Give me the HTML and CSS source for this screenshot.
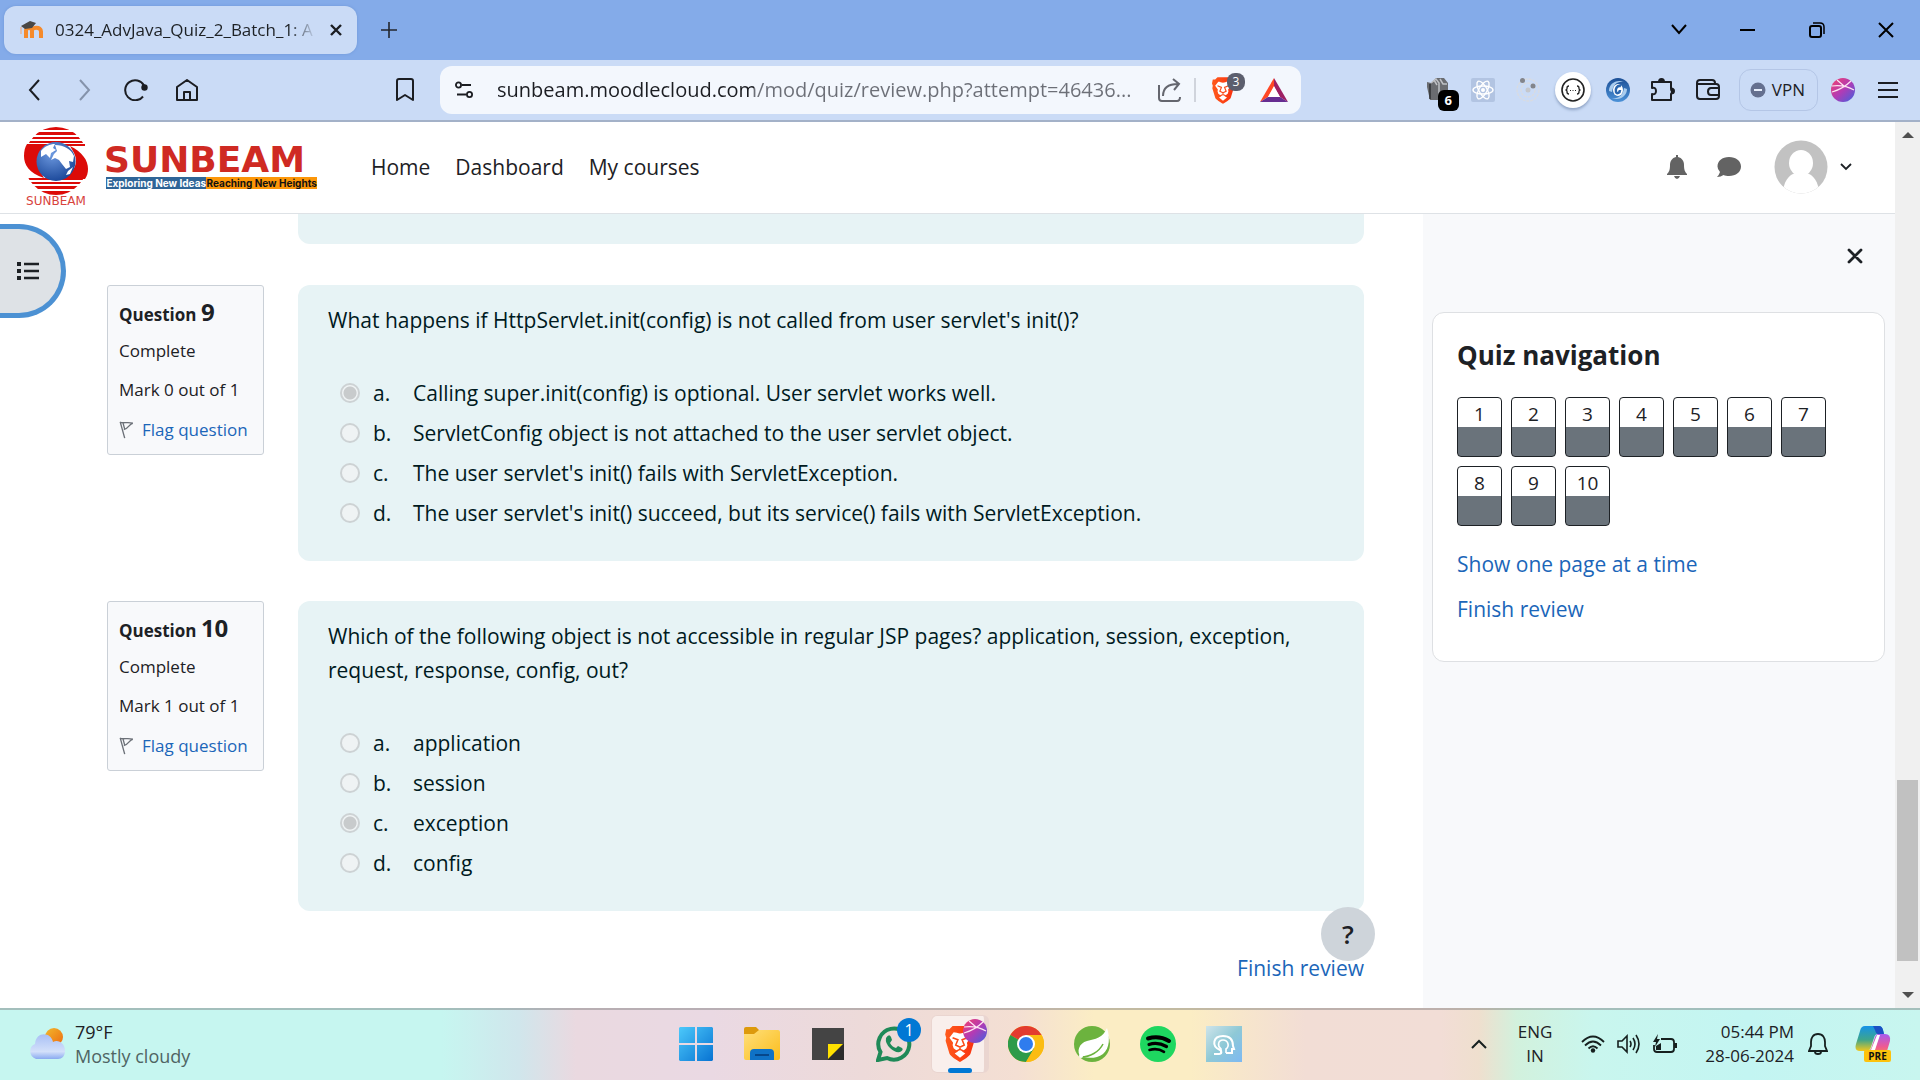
FILE: index.html
```html
<!DOCTYPE html>
<html lang="en">
<head>
<meta charset="utf-8">
<title>0324_AdvJava_Quiz_2_Batch_1: Attempt review</title>
<link rel="stylesheet" href="styles.css">
</head>
<body>
<svg class="defs" aria-hidden="true">
  <defs>
    <linearGradient id="g-orb" x1="0" y1="0" x2="1" y2="1"><stop offset="0" stop-color="#f5406a"/><stop offset=".5" stop-color="#b23bb5"/><stop offset="1" stop-color="#3f62e0"/></linearGradient>
    <linearGradient id="g-brave" x1="0" y1="0" x2="1" y2="0"><stop offset="0" stop-color="#ff5a1c"/><stop offset="1" stop-color="#f9310f"/></linearGradient>
    <linearGradient id="g-win" x1="0" y1="0" x2="1" y2="1"><stop offset="0" stop-color="#4cc9fb"/><stop offset="1" stop-color="#0873d2"/></linearGradient>
    <linearGradient id="g-folder" x1="0" y1="0" x2="1" y2="1"><stop offset="0" stop-color="#ffdf7a"/><stop offset="1" stop-color="#fbbd1c"/></linearGradient>
    <linearGradient id="g-cloud" x1="0" y1="0" x2="0" y2="1"><stop offset="0" stop-color="#a9c0f5"/><stop offset=".7" stop-color="#d3e0fa"/><stop offset="1" stop-color="#8aaaf0"/></linearGradient>
    <linearGradient id="g-sun" x1="0" y1="0" x2="1" y2="1"><stop offset="0" stop-color="#f2b92c"/><stop offset="1" stop-color="#ee6a11"/></linearGradient>
    <linearGradient id="g-head" x1="0" y1="0" x2="1" y2="1"><stop offset="0" stop-color="#cfe4ea"/><stop offset=".5" stop-color="#8fc9d6"/><stop offset="1" stop-color="#7db9f2"/></linearGradient>
    <linearGradient id="g-cop1" x1="0" y1="0" x2="0" y2="1"><stop offset="0" stop-color="#1592e8"/><stop offset=".55" stop-color="#3ea58c"/><stop offset="1" stop-color="#f2c81c"/></linearGradient>
    <linearGradient id="g-cop2" x1="0" y1="0" x2="0" y2="1"><stop offset="0" stop-color="#a55bf0"/><stop offset=".6" stop-color="#ee5a93"/><stop offset="1" stop-color="#fb8a4a"/></linearGradient>
    <radialGradient id="g-globe" cx=".4" cy=".3" r=".8"><stop offset="0" stop-color="#6e9ae0"/><stop offset="1" stop-color="#123f92"/></radialGradient>
    <linearGradient id="g-swirl" x1="0" y1="0" x2="0" y2="1"><stop offset="0" stop-color="#1c4f96"/><stop offset="1" stop-color="#4c92d8"/></linearGradient>
    <symbol id="orb" viewBox="0 0 24 24"><circle cx="12" cy="12" r="12" fill="url(#g-orb)"/><path d="M1 8c8-1 15 0 22 4M1 14C8 12 15 8 20 3M6 2l7 6" fill="none" stroke="#ffe3f2" stroke-width="1.200"/></symbol>
    <symbol id="lion" viewBox="0 0 28 34"><path fill="url(#g-brave)" d="M7 0h14l3 3 3 0 1 5-1 3 .6 3L24 26c-1 3-7 6-10 8-3-2-9-5-10-8L.4 14 1 11 0 8l1-5 3 0z"/><path fill="#fff" d="M14 7c-2 0-4-1-6-1L4 11l3 4c1 1 0 2 0 3l1 3 4 3-3 2 5 4 5-4-3-2 4-3 1-3c0-1-1-2 0-3l3-4-4-5c-2 0-4 1-6 1z"/><path fill="none" stroke="#fb4a18" stroke-width="1.500" d="M7 11l5 2-2 5 4 2 4-2-2-5 5-2M10 24l4-2 4 2M14 20v2"/></symbol>
    <symbol id="flag" viewBox="0 0 16 20"><path d="M1 1 6 19M1 1.500c4 1.500 8-1 14 1C11 3 10 9 5 9.500M4 1.800 6 9" fill="none" stroke="#6b7077" stroke-width="1.500"/></symbol>
  </defs>
</svg>

<header class="tabstrip">
  <div class="tab">
    <svg class="favicon" viewBox="0 0 24 18" width="24" height="18"><path d="M6 17V9.500c0-3.500 6-3.500 6 0V17M12 9.500c0-3.500 9-4.500 9 1V17" fill="none" stroke="#f58a2b" stroke-width="4"/><path d="M1 5 10 0l6 2-4 5-7 1z" fill="#4a4745"/><path d="M1 6v7" stroke="#e3b79c" stroke-width="1.500"/></svg>
    <span class="tab-title">0324_AdvJava_Quiz_2_Batch_1: A</span>
    <button class="icon-btn tab-close" aria-label="Close tab"><svg width="12" height="12" viewBox="0 0 12 12"><path d="m1 1 10 10M11 1 1 11" stroke="#1b1d22" stroke-width="2.400"/></svg></button>
  </div>
  <button class="icon-btn new-tab" aria-label="New tab"><svg width="16" height="16" viewBox="0 0 16 16"><path d="M8 0v16M0 8h16" stroke="#22262e" stroke-width="1.600"/></svg></button>
  <div class="window-controls">
    <button class="icon-btn" aria-label="Search tabs"><svg width="16" height="12" viewBox="0 0 16 12"><path d="m1 1 7 8 7-8" fill="none" stroke="#000" stroke-width="2"/></svg></button>
    <button class="icon-btn" aria-label="Minimize"><svg width="16" height="4" viewBox="0 0 16 4"><path d="M0 2h15" stroke="#000" stroke-width="2"/></svg></button>
    <button class="icon-btn" aria-label="Restore"><svg width="16" height="16" viewBox="0 0 16 16"><rect x="1" y="4" width="11" height="11" rx="2" fill="none" stroke="#000" stroke-width="2"/><path d="M4 1h7q4 0 4 4v7" fill="none" stroke="#000" stroke-width="1.500"/></svg></button>
    <button class="icon-btn" aria-label="Close window"><svg width="16" height="16" viewBox="0 0 16 16"><path d="m1 1 14 14M15 1 1 15" stroke="#000" stroke-width="2"/></svg></button>
  </div>
</header>

<div class="toolbar">
  <div class="toolbar-left">
    <button class="icon-btn" aria-label="Back"><svg width="12" height="22" viewBox="0 0 12 22"><path d="M11 1 2 11l9 10" fill="none" stroke="#1b1d22" stroke-width="2"/></svg></button>
    <button class="icon-btn" aria-label="Forward"><svg width="12" height="22" viewBox="0 0 12 22"><path d="m1 1 9 10-9 10" fill="none" stroke="#8593ab" stroke-width="2"/></svg></button>
    <button class="icon-btn" aria-label="Reload"><svg width="24" height="22" viewBox="0 0 24 22"><path d="M20 6.500A10 10 0 1 0 19 17.500" fill="none" stroke="#1b1d22" stroke-width="2"/><circle cx="20.500" cy="8.500" r="3.200" fill="#1b1d22"/></svg></button>
    <button class="icon-btn" aria-label="Home"><svg width="22" height="22" viewBox="0 0 22 22"><path d="M1 8 11 1l10 7v13H1zM8 21v-8h6v8" fill="none" stroke="#1b1d22" stroke-width="2" stroke-linejoin="round"/></svg></button>
    <button class="icon-btn bookmark" aria-label="Bookmark"><svg width="18" height="24" viewBox="0 0 18 24"><path d="M1 3q0-2 2-2h12q2 0 2 2v19l-8-5-8 5z" fill="none" stroke="#1b1d22" stroke-width="2" stroke-linejoin="round"/></svg></button>
  </div>
  <div class="address-bar">
    <button class="icon-btn" aria-label="Site settings"><svg width="18" height="18" viewBox="0 0 18 18"><path d="M7 4h9M2 13.500h9" stroke="#1b1d22" stroke-width="1.800"/><circle cx="3.500" cy="4" r="2.600" fill="none" stroke="#1b1d22" stroke-width="1.800"/><circle cx="14.500" cy="13.500" r="2.600" fill="none" stroke="#1b1d22" stroke-width="1.800"/></svg></button>
    <input class="url" type="text" aria-label="Address" value="sunbeam.moodlecloud.com/mod/quiz/review.php?attempt=46436...">
    <button class="icon-btn" aria-label="Share"><svg width="24" height="24" viewBox="0 0 24 24"><path d="M1 7v13q0 3 3 3h15q3 0 3-4M5 18C5 10 10 6 20 6M15 1l6 5-5 6" fill="none" stroke="#64666e" stroke-width="2"/></svg></button>
    <span class="divider"></span>
    <button class="icon-btn shields" aria-label="Brave Shields"><svg width="22" height="27"><use href="#lion"/></svg><span class="shield-count">3</span></button>
    <button class="icon-btn" aria-label="Brave Rewards"><svg width="28" height="24" viewBox="0 0 28 24"><path d="M14 0 0 24l8-5 6-10z" fill="#ff4724"/><path d="M14 0v9l6 10 8 5z" fill="#9e1f63"/><path d="m0 24 8-5h12l8 5z" fill="#662d91"/><path d="m14 8 6 11H8z" fill="#fff"/></svg></button>
  </div>
  <div class="toolbar-right">
    <button class="icon-btn ext-count" aria-label="Container extension"><svg width="24" height="24" viewBox="0 0 24 24"><path d="M5 5 10 0h8l4 5v17H4L1 9V4z" fill="#6a6c70"/><path d="m5 5 5-4 3 4v17M14 1l3 5h4M8 2l3 5" fill="none" stroke="#bfc1c5" stroke-width="1.500"/><path d="M4 6v15" stroke="#303235" stroke-width="1.500"/></svg><span class="count">6</span></button>
    <button class="icon-btn" aria-label="React tools"><svg width="24" height="24" viewBox="0 0 24 24"><rect width="24" height="24" rx="2" fill="#b2c4e2"/><g fill="none" stroke="#fff" stroke-width="1.400"><ellipse cx="12" cy="12" rx="10" ry="4"/><ellipse cx="12" cy="12" rx="10" ry="4" transform="rotate(60 12 12)"/><ellipse cx="12" cy="12" rx="10" ry="4" transform="rotate(120 12 12)"/></g><circle cx="12" cy="12" r="2" fill="#fff"/></svg></button>
    <button class="icon-btn" aria-label="Orbit extension"><svg width="24" height="24" viewBox="0 0 24 24"><g fill="none" stroke="#d9dbe0" stroke-width="1.300" stroke-dasharray="3 1"><circle cx="12" cy="12" r="11"/><circle cx="12" cy="12" r="7"/></g><circle cx="12" cy="12" r="2.500" fill="#c5c7cc"/><circle cx="6.500" cy="2.500" r="2.500" fill="#83858b"/><circle cx="17" cy="8" r="2.500" fill="#83858b"/></svg></button>
    <button class="icon-btn" aria-label="JSON viewer"><span class="json-disc"><svg width="24" height="24" viewBox="0 0 24 24"><circle cx="12" cy="12" r="11" fill="none" stroke="#222" stroke-width="1.600"/><path d="M8 8q-2 0-2 2v1l-1 1 1 1v1q0 2 2 2M16 8q2 0 2 2v1l1 1-1 1v1q0 2-2 2" fill="none" stroke="#222" stroke-width="1.300"/><path d="M9 12.500h1m1.500 0h1m1.500 0h1" stroke="#222" stroke-width="1"/></svg></span></button>
    <button class="icon-btn" aria-label="Swirl extension"><svg width="24" height="24" viewBox="0 0 24 24"><circle cx="12" cy="12" r="12" fill="url(#g-swirl)"/><path d="M3 13C3 6 10 1 18 4 11 3 7 7 6 14zM21 11c0 7-7 12-15 9 7 1 11-3 12-10z" fill="#a9ccee"/><ellipse cx="12" cy="12" rx="5" ry="6" fill="#fff"/><path d="M15 8c-4-1-6 3-5 6 1 2 4 1 4-2" fill="none" stroke="#2a66ae" stroke-width="2.600"/></svg></button>
    <button class="icon-btn" aria-label="Extensions"><svg width="26" height="24" viewBox="0 0 26 24"><path d="M2 4h19v6q0 3 1 3t-1 3v6H2v-6q4 1 4-3t-4-3z" fill="none" stroke="#1b1d22" stroke-width="2" stroke-linejoin="round"/><path d="M8 4q0-4 3.500-4T15 4zM21 9.500q4 0 4 3.500t-4 3.500z" fill="#1b1d22"/></svg></button>
    <button class="icon-btn" aria-label="Wallet"><svg width="24" height="22" viewBox="0 0 24 22"><path d="M1 4q0-3 3-3h12q3 0 3 3v1M1 4q0 1 3 1h16q3 0 3 3v9q0 3-3 3H4q-3 0-3-3zM23 9h-8q-3 0-3 3.500t3 3.500h8" fill="none" stroke="#1b1d22" stroke-width="2" stroke-linejoin="round"/></svg></button>
    <button class="vpn"><svg width="16" height="16" viewBox="0 0 16 16"><circle cx="8" cy="8" r="7.500" fill="#65708f"/><path d="M4 8h8" stroke="#e8effc" stroke-width="2"/></svg>VPN</button>
    <button class="icon-btn" aria-label="Profile"><svg width="24" height="24"><use href="#orb"/></svg></button>
    <button class="icon-btn" aria-label="Menu"><svg width="20" height="16" viewBox="0 0 20 16"><path d="M0 1h20M0 8h20M0 15h20" stroke="#1b1d22" stroke-width="1.800"/></svg></button>
  </div>
</div>

<div class="viewport">
  <div class="page">
    <header class="site-header">
      <a class="brand" href="#" aria-label="Sunbeam">
        <svg class="brand-mark" width="64" height="80" viewBox="0 0 64 80">
          <clipPath id="disc"><ellipse cx="32" cy="34" rx="32" ry="34"/></clipPath>
          <g clip-path="url(#disc)"><path fill="#dc0b08" d="M0 0h64v3H0zM0 5h64v3H0zM0 10h64v2H0zM0 14h64v2H0zM0 51h64v2H0zM0 55h64v2H0zM0 59h64v3H0zM0 64h64v4H0z"/></g>
          <path fill="#dc0b08" d="M3 17h58v2H42C22 20 12 32 16 44l4 7C5 46 0 38 0 29c0-5 1-9 3-12z"/>
          <path fill="#dc0b08" d="M46 19c12 6 18 14 18 23 0 4-1 7-3 10H30C48 50 56 38 50 26z"/>
          <circle cx="32" cy="34.500" r="19.500" fill="url(#g-globe)"/>
          <path fill="#fff" d="M17 24c4-5 9-7 14-7l-2 4 3 2-5 3-1 5-4-4-5 3zM31 18c9 0 16 4 19 11l-1 6-4-1 1 6-4 2-4-5-3-4-4-2-4 2 3-6 3-3zM44 44l5-4-3 7-4 1z"/>
          <text x="32" y="78" text-anchor="middle" class="brand-small">SUNBEAM</text>
        </svg>
        <span class="wordmark"><span class="wordmark-name">SUNBEAM</span><span class="tagline"><span class="tag-blue">Exploring New Ideas</span><span class="tag-orange">Reaching New Heights</span></span></span>
      </a>
      <nav class="site-nav"><a href="#">Home</a><a href="#">Dashboard</a><a href="#">My courses</a></nav>
      <div class="user-tools">
        <button class="icon-btn" aria-label="Notifications"><svg width="20" height="24" viewBox="0 0 20 24"><path fill="#636363" d="M9 0h2v2c4 1 6 4 6 8 0 5 1 7 3 9v1H0v-1c2-2 3-4 3-9 0-4 2-7 6-8zM7 21h6q-1 3-3 3t-3-3z"/></svg></button>
        <button class="icon-btn" aria-label="Messages"><svg width="24" height="20" viewBox="0 0 24 20"><path fill="#636363" d="M12 0c7 0 12 4 12 9.500S19 19 12 19c-2 0-4-.3-5.500-1Q4 20 0 20q2-2 3-5-2.500-2.500-2.500-5.500C.5 4 5 0 12 0z"/></svg></button>
        <button class="user-menu" aria-label="User menu"><svg width="54" height="54" viewBox="0 0 54 54"><clipPath id="av"><circle cx="27" cy="27" r="26.500"/></clipPath><g clip-path="url(#av)"><rect width="54" height="54" fill="#c2c2c2"/><ellipse cx="27" cy="23" rx="12" ry="13" fill="#fff"/><path d="M9 54c0-12 6-20 13-21h10c7 1 13 9 13 21z" fill="#fff"/></g></svg><svg width="12" height="8" viewBox="0 0 12 8"><path d="m1 1 5 5 5-5" fill="none" stroke="#1d2125" stroke-width="1.800"/></svg></button>
      </div>
    </header>

    <div class="page-body">
      <button class="drawer-toggle" aria-label="Open course index"><svg width="22" height="20" viewBox="0 0 22 20"><path d="M7 3h15M7 10h15M7 17h15" stroke="#1d2125" stroke-width="2.400"/><path d="M0 3h4M0 10h4M0 17h4" stroke="#1d2125" stroke-width="4"/></svg></button>
      <main class="content">
        <div class="prev-question"></div>

        <section class="question">
          <div class="info">
            <h3>Question <span class="qno">9</span></h3>
            <p>Complete</p>
            <p>Mark 0 out of 1</p>
            <a href="#"><svg width="15" height="18"><use href="#flag"/></svg>Flag question</a>
          </div>
          <fieldset class="formulation">
            <legend class="qtext">What happens if HttpServlet.init(config) is not called from user servlet's init()?</legend>
            <ul class="answers">
              <li><label><input type="radio" name="q9" checked disabled><span class="letter">a.</span><span>Calling super.init(config) is optional. User servlet works well.</span></label></li>
              <li><label><input type="radio" name="q9" disabled><span class="letter">b.</span><span>ServletConfig object is not attached to the user servlet object.</span></label></li>
              <li><label><input type="radio" name="q9" disabled><span class="letter">c.</span><span>The user servlet's init() fails with ServletException.</span></label></li>
              <li><label><input type="radio" name="q9" disabled><span class="letter">d.</span><span>The user servlet's init() succeed, but its service() fails with ServletException.</span></label></li>
            </ul>
          </fieldset>
        </section>

        <section class="question">
          <div class="info">
            <h3>Question <span class="qno">10</span></h3>
            <p>Complete</p>
            <p>Mark 1 out of 1</p>
            <a href="#"><svg width="15" height="18"><use href="#flag"/></svg>Flag question</a>
          </div>
          <fieldset class="formulation">
            <legend class="qtext">Which of the following object is not accessible in regular JSP pages? application, session, exception, request, response, config, out?</legend>
            <ul class="answers">
              <li><label><input type="radio" name="q10" disabled><span class="letter">a.</span><span>application</span></label></li>
              <li><label><input type="radio" name="q10" disabled><span class="letter">b.</span><span>session</span></label></li>
              <li><label><input type="radio" name="q10" checked disabled><span class="letter">c.</span><span>exception</span></label></li>
              <li><label><input type="radio" name="q10" disabled><span class="letter">d.</span><span>config</span></label></li>
            </ul>
          </fieldset>
        </section>

        <div class="submit-row"><a href="#">Finish review</a><button class="help" aria-label="Help">?</button></div>
      </main>

      <aside class="drawer">
        <button class="icon-btn drawer-close" aria-label="Close block drawer"><svg width="16" height="16" viewBox="0 0 16 16"><path d="m2 2 12 12M14 2 2 14" stroke="#1d2125" stroke-width="2.800" stroke-linecap="round"/></svg></button>
        <section class="nav-card">
          <h2>Quiz navigation</h2>
          <div class="qn-buttons">
            <a href="#">1</a><a href="#">2</a><a href="#">3</a><a href="#">4</a><a href="#">5</a><a href="#">6</a><a href="#">7</a><a href="#">8</a><a href="#">9</a><a href="#">10</a>
          </div>
          <a class="card-link" href="#">Show one page at a time</a>
          <a class="card-link" href="#">Finish review</a>
        </section>
      </aside>
    </div>
  </div>
  <div class="scrollbar" aria-hidden="true">
    <svg width="12" height="6" viewBox="0 0 12 6"><path d="M6 0 12 6H0z" fill="#505050"/></svg>
    <div class="track"><span class="before"></span><span class="thumb"></span><span class="after"></span></div>
    <svg width="12" height="6" viewBox="0 0 12 6"><path d="M0 0h12L6 6z" fill="#505050"/></svg>
  </div>
</div>

<footer class="taskbar">
  <div class="weather">
    <svg width="38" height="32" viewBox="0 0 38 32"><circle cx="26" cy="9" r="9" fill="url(#g-sun)"/><path d="M8 31a8 8 0 0 1-1-15C8 3 23 4 25 14c5-3 12 1 12 9 0 5-3 8-7 8z" fill="url(#g-cloud)"/></svg>
    <div class="two-line"><span>79°F</span><span class="muted">Mostly cloudy</span></div>
  </div>
  <div class="apps">
    <button aria-label="Start"><svg width="36" height="36" viewBox="0 0 36 36"><path fill="url(#g-win)" d="M2 1h15v16H1V2zM19 1h15l1 1v15H19zM1 19h16v16H2l-1-1zM19 19h16v15l-1 1H19z"/></svg></button>
    <button aria-label="File Explorer"><svg width="36" height="34" viewBox="0 0 36 34"><path fill="#dd9a0c" d="M0 2q0-2 2-2h10l3 3v5H0z"/><path fill="url(#g-folder)" d="M0 7h10l5-4h19q2 0 2 2v26q0 2-2 2H2q-2 0-2-2z"/><path fill="#0f72c6" d="M6 33v-7q0-4 4-4h16q4 0 4 4v7z"/><path d="M11 28h14" stroke="#06478a" stroke-width="2"/></svg></button>
    <button aria-label="Sticky Notes"><svg width="32" height="32" viewBox="0 0 32 32"><path d="M0 0h32v32H0z" fill="#444"/><path d="M16 16h16v16H16z" fill="#2c2c2c"/><path d="M16 16h15L16 31z" fill="#ffe100"/></svg></button>
    <button aria-label="WhatsApp, 1 unread"><svg width="36" height="36" viewBox="0 0 36 36"><path d="m2 34 2.500-8A15.500 15.500 0 1 1 11 32z" fill="none" stroke="#1f8a58" stroke-width="4"/><path d="M10 12q3-5 5-1l1 3-2 3q2 4 6 5l2-2 4 2q2 2-2 4-5 1-10-4-5-5-4-10z" fill="#1f8a58"/></svg><span class="app-badge">1</span></button>
    <button class="active" aria-label="Brave"><svg width="30" height="36"><use href="#lion"/></svg><svg class="orb-badge" width="24" height="24"><use href="#orb"/></svg></button>
    <button aria-label="Chrome"><svg width="36" height="36" viewBox="0 0 36 36"><circle cx="18" cy="18" r="18" fill="#fbbc12"/><path d="M18 18 2.400 9A18 18 0 0 1 33.600 9L18 9z" fill="#e33b2e"/><path d="M2.400 9A18 18 0 0 0 18 36l8-13.500-8-4.500z" fill="#2d9b4a"/><path d="M18 9h15.600A18 18 0 0 1 18 36l8-13.500z" fill="#fbbc12"/><circle cx="18" cy="18" r="9" fill="#fff"/><circle cx="18" cy="18" r="7" fill="#2f7cee"/></svg></button>
    <button aria-label="Spring Tools"><svg width="36" height="36" viewBox="0 0 36 36"><circle cx="18" cy="18" r="18" fill="#6cb33e"/><path d="M33 2c3 9 3 20-4 26-6 5-15 4-22 3-5-5-2-14 6-16 8-2 16-3 20-13z" fill="#fff"/><path d="M7 31c9 0 18-5 22-13" fill="none" stroke="#6cb33e" stroke-width="1.500"/><circle cx="7" cy="30" r="2" fill="#fff"/></svg></button>
    <button aria-label="Spotify"><svg width="36" height="36" viewBox="0 0 36 36"><circle cx="18" cy="18" r="18" fill="#1ed760"/><g fill="none" stroke="#000" stroke-linecap="round"><path d="M8 12.500c7-2 15-1 21 2.500" stroke-width="4"/><path d="M9 18.500c6-2 12-1 17.500 2" stroke-width="3.200"/><path d="M9.500 24c5-1.500 10-1 14.500 1.800" stroke-width="2.600"/></g></svg></button>
    <button aria-label="Mind app"><svg width="36" height="36" viewBox="0 0 36 36"><path fill="url(#g-head)" d="M0 0h36v36H0z"/><path d="M8 28h5c3 0 3-3 1-4-9-4-7-14 3-14 7 0 10 4 10 10l1 3h-2v4h-6" fill="none" stroke="#fff" stroke-width="2"/><path d="M15 28v-5c-4-3-3-9 2-9s7 6 3 9v4" fill="none" stroke="#fff" stroke-width="1.600"/></svg></button>
  </div>
  <div class="tray">
    <button class="icon-btn chevron" aria-label="Show hidden icons"><svg width="16" height="10" viewBox="0 0 16 10"><path d="m1 9 7-7 7 7" fill="none" stroke="#16201f" stroke-width="2"/></svg></button>
    <div class="two-line lang"><span>ENG</span><span>IN</span></div>
    <div class="status">
      <svg width="24" height="18" viewBox="0 0 24 18"><g fill="none" stroke="#16201f" stroke-width="1.800"><path d="M1 7q11-11 22 0M4 10.500q8-8 16 0M7.500 13.500q4.500-4.500 9 0"/></g><circle cx="12" cy="15.500" r="2.200" fill="#16201f"/></svg>
      <svg width="24" height="20" viewBox="0 0 24 20"><path d="M1 7h4l5-5v16l-5-5H1zM13 7q2 3 0 6M16 4q4 6 0 12M19 1q6 9 0 18" fill="none" stroke="#16201f" stroke-width="1.600"/></svg>
      <svg width="24" height="20" viewBox="0 0 24 20"><path d="M8 5h10q3 0 3 3v7q0 3-3 3H4q-3 0-3-3v-4" fill="none" stroke="#16201f" stroke-width="1.800"/><path d="M21 9h3v5h-3zM3 16v-4l5-3v7zM5 0 0 8h3l-1 5 5-8H4z" fill="#16201f"/></svg>
    </div>
    <div class="two-line clock"><span>05:44 PM</span><span>28-06-2024</span></div>
    <button class="icon-btn bell" aria-label="Notification center"><svg width="20" height="22" viewBox="0 0 20 22"><path d="M10 1C5 1 3 5 3 9v4l-2 5h18l-2-5V9c0-4-2-8-7-8zM7 19q0 2 3 2t3-2" fill="none" stroke="#16201f" stroke-width="1.800"/></svg></button>
    <button class="icon-btn copilot" aria-label="Copilot preview"><svg width="36" height="30" viewBox="0 0 36 30"><path d="M10 0h14q3 0 4 4l1 4h-6q-3 0-4 4l-3 9q-1 4-5 4H5q-6 0-4-7L5 5q1-5 5-5z" fill="url(#g-cop1)"/><path d="M18 0h6q3 0 4 4l1 4h-6q-2 0-3-4z" fill="#1c50c4"/><path d="M23 8h7q6 0 5 7l-3 10q-1 4-5 4H13q-2 0-3-4h2q4 0 5-5l3-9q1-3 3-3z" fill="url(#g-cop2)"/><path d="M22 9h3l-5 15h-4z" fill="#fff"/></svg><span class="pre">PRE</span></button>
  </div>
</footer>
</body>
</html>
```
FILE: styles.css
```css
* { box-sizing: border-box; }

:root {
  --ink: #1d2125;
  --link: #1b66b9;
  --panel: #e7f3f5;
  --soft: #f8f9fb;
}

body {
  margin: 0;
  height: 100vh;
  display: flex;
  flex-direction: column;
  overflow: hidden;
  font-family: "Open Sans", "Noto Sans", sans-serif;
  font-size: 21px;
  line-height: 34px;
  color: var(--ink);
  background: #fff;
}

button { font: inherit; color: inherit; border: 0; padding: 0; background: none; }
a { color: var(--link); text-decoration: none; }
h2, h3, p, ul { margin: 0; padding: 0; }
svg { display: block; flex: none; }
.defs { position: absolute; width: 0; height: 0; }

.icon-btn { display: flex; align-items: center; justify-content: center; flex: none; }

/* Tab strip */
.tabstrip { display: flex; align-items: center; height: 60px; flex: none; padding-left: 4px; background: #84abe9; }
.tab { display: flex; align-items: center; width: 353px; height: 48px; padding: 0 14px 0 16px; border-radius: 12px; background: #cadbf6; box-shadow: 0 0 3px #6f97d6; }
.tab-title { flex: 1; min-width: 0; margin-left: 11px; white-space: nowrap; font-size: 17px; mask-image: linear-gradient(to right, #000 90%, transparent); }
.tab-close { width: 40px; margin-right: -13px; height: 32px; }
.new-tab { width: 64px; height: 48px; }
.window-controls { display: flex; margin-left: auto; }
.window-controls .icon-btn { width: 69px; height: 60px; }

/* Toolbar */
.toolbar { display: grid; grid-template-columns: 440fr 861fr 619fr; align-items: center; height: 62px; flex: none; background: #cadbf6; border-bottom: 2px solid #a3b1c8; }
.toolbar-left { display: flex; padding: 0 10px 0 8px; }
.toolbar-left .icon-btn { width: 51px; height: 48px; }
.toolbar-left .bookmark { margin-left: auto; }
.address-bar { display: flex; align-items: center; height: 48px; padding: 0 13px 0 15px; border-radius: 12px; background: #f3f7fd; }
.url {
  flex: 1; min-width: 0; margin: 0 20px 0 24px; padding: 0; border: 0; outline: 0;
  font: inherit; font-size: 20px; line-height: 32px; color: #1b1d22;
  background: linear-gradient(to right, #1b1d22 257px, #6c6f77 257px);
  -webkit-background-clip: text; background-clip: text;
  -webkit-text-fill-color: transparent;
}
.divider { width: 2px; height: 24px; margin: 0 16px 0 12px; background: #d0d4dc; }
.shields { position: relative; margin-right: 26px; }
.shield-count { position: absolute; top: -4px; left: 15px; width: 18px; height: 18px; border-radius: 8px; background: #5c5f6e; color: #fff; font-size: 12px; line-height: 18px; }
.toolbar-right { display: flex; align-items: center; justify-content: flex-end; padding-right: 10px; }
.toolbar-right .icon-btn { width: 45px; height: 48px; }
.ext-count { position: relative; }
.count { position: absolute; left: 22px; bottom: 3px; width: 21px; height: 21px; border-radius: 6px; background: #000; color: #fff; font-size: 13px; font-weight: 700; line-height: 21px; }
.json-disc { display: flex; align-items: center; justify-content: center; width: 36px; height: 36px; border-radius: 50%; background: #fff; box-shadow: 0 2px 3px #8fa3c4; }
.vpn { display: flex; align-items: center; gap: 6px; height: 42px; margin: 0 2px 0 8px; padding: 0 12px 0 10px; border: 1px solid #b4c6e6; border-radius: 12px; font-size: 17px; }

/* Site page */
.viewport { display: flex; flex: 1; min-height: 0; }
.page { display: flex; flex-direction: column; flex: 1; min-width: 0; }
.site-header { display: flex; align-items: center; flex: none; height: 92px; padding: 0 43px 2px 24px; border-bottom: 1px solid #dee2e6; }
.brand { display: flex; align-items: center; gap: 16px; }
.brand-small { font-family: "DejaVu Sans", sans-serif; font-size: 12px; fill: #d8423c; }
.wordmark { display: flex; flex-direction: column; gap: 1px; width: 213px; }
.wordmark-name { font-family: "DejaVu Sans", sans-serif; font-size: 36px; font-weight: 700; line-height: 32px; color: #cf2a23; }
.tagline { display: flex; margin-left: 2px; font-family: Inter, sans-serif; font-size: 10px; font-weight: 700; line-height: 12px; white-space: nowrap; }
.tag-blue { flex: 100; text-align: center; background: #2f6597; color: #fff; }
.tag-orange { flex: 110; text-align: center; background: #fc9608; color: #111; }
.site-nav { display: flex; gap: 25px; margin-left: 54px; }
.site-nav a { color: var(--ink); }
.user-tools { display: flex; align-items: center; gap: 30px; margin-left: auto; }
.user-menu { display: flex; align-items: center; gap: 12px; margin-left: 3px; }

.page-body { position: relative; display: flex; flex: 1; min-height: 0; }
.content { flex: 1; min-width: 0; padding: 0 59px 0 107px; }
.drawer-toggle { position: absolute; left: 0; top: 10px; display: flex; align-items: center; width: 66px; height: 94px; padding-left: 17px; border: 5px solid #4c91d3; border-left: 0; border-radius: 0 47px 47px 0; background: #dee2e6; }

.prev-question { height: 30px; margin: 0 0 41px 191px; border-radius: 0 0 12px 12px; background: var(--panel); }
.question { display: flex; align-items: flex-start; gap: 34px; margin-bottom: 40px; }
.info { flex: none; width: 157px; height: 170px; padding: 9px 11px; border: 1px solid #cad0d7; border-radius: 3px; background: var(--soft); font-size: 17px; line-height: 40px; white-space: nowrap; }
.info h3 { font-size: 17px; line-height: 34px; }
.info .qno { font-size: 24px; }
.info p:first-of-type { line-height: 38px; }
.info a { display: flex; align-items: center; gap: 8px; }
.formulation { flex: 1; min-width: 0; margin: 0; padding: 18px 30px 28px; border: 0; border-radius: 12px; background: var(--panel); color: #001a1e; }
.qtext { float: left; width: 100%; padding: 0; margin-bottom: 36px; }
.answers { clear: both; list-style: none; padding-left: 12px; }
.answers label { display: flex; align-items: center; height: 40px; }
.answers input { appearance: none; flex: none; width: 20px; height: 20px; margin: 0 13px 0 0; border: 2px solid #cdd2d4; border-radius: 50%; background: #eff3f4; }
.answers input:checked { background: radial-gradient(circle, #c8cbcc 6px, #eff3f4 7px); }
.letter { width: 40px; }
.submit-row { position: relative; display: flex; justify-content: flex-end; }
.help { position: absolute; right: -11px; top: -44px; width: 54px; height: 54px; border-radius: 50%; background: #ced4da; font-size: 26px; font-weight: 600; }

.drawer { flex: none; width: 472px; padding: 22px 10px 0 9px; background: var(--soft); }
.drawer-close { width: 40px; height: 40px; margin: 0 10px 36px auto; }
.nav-card { padding: 24px 24px 25px; border: 1px solid #dee0e3; border-radius: 12px; background: #fff; }
.nav-card h2 { margin-bottom: 24px; font-size: 26px; line-height: 36px; }
.qn-buttons { display: flex; flex-wrap: wrap; gap: 9px; margin-bottom: 20px; }
.qn-buttons a { width: 45px; height: 60px; border: 1px solid var(--ink); border-radius: 4px; background: linear-gradient(#fff 50%, #6a737b 50%); color: var(--ink); font-size: 19px; line-height: 32px; text-align: center; }
.card-link { display: block; line-height: 36px; margin-bottom: 9px; }

.scrollbar { display: flex; flex-direction: column; align-items: center; flex: none; width: 25px; padding: 10px 2px; background: #f0f0f0; }
.track { display: flex; flex-direction: column; flex: 1; align-self: stretch; }
.before { flex: 642; }
.thumb { flex: 181; background: #c1c1c1; }
.after { flex: 31; }

/* Taskbar */
.taskbar {
  display: grid; grid-template-columns: 1fr auto 1fr; align-items: center; flex: none; height: 72px;
  padding-bottom: 2px;
  border-top: 2px solid rgba(110, 110, 110, 0.400);
  background: linear-gradient(to right, #c6f6f0 23%, #d0e6ec 27%, #ead9e0 30%, #ead9e3 37%, #eddad9 45%, #f4dfd3 53%, #fbedc4 57%, #fbedc4 62%, #f2ddd5 68%, #f2ddd6 75%, #efdfce 77%, #d2f1dd 79%, #c9f6ee 83%, #c3f5f2 91%, #c8f6ef 100%);
  background-origin: border-box;
  font-size: 17px;
}
.weather { display: flex; align-items: center; gap: 9px; padding-left: 28px; }
.two-line { display: flex; flex-direction: column; line-height: 24px; }
.weather .two-line { font-size: 18px; }
.muted { color: #4f6463; }
.apps { display: flex; }
.apps button { position: relative; display: flex; align-items: center; justify-content: center; width: 66px; height: 58px; }
.app-badge { position: absolute; top: 3px; right: 6px; width: 24px; height: 24px; border-radius: 50%; background: #0078d4; color: #fff; font-size: 16px; line-height: 24px; }
.apps .active::before { content: ""; position: absolute; inset: 0 4px; border: 1px solid #ead5d0; border-right-width: 5px; border-radius: 6px; background: #f9efec; }
.apps .active::after { content: ""; position: absolute; bottom: 0; left: 21px; width: 24px; height: 5px; border-radius: 3px; background: #0078d4; }
.apps .active svg { position: relative; }
.apps .active .orb-badge { position: absolute; top: 4px; right: 6px; }
.tray { display: flex; align-items: center; justify-content: flex-end; padding-right: 29px; }
.chevron { width: 48px; height: 48px; margin-right: 6px; }
.lang { align-items: center; width: 52px; }
.status { display: flex; align-items: center; gap: 12px; margin-left: 20px; }
.clock { align-items: flex-end; width: 105px; margin-left: 12px; white-space: nowrap; }
.bell { margin: 0 27px 0 14px; }
.copilot { position: relative; height: 36px; align-items: flex-start; }
.pre { position: absolute; right: 0; bottom: 0; width: 27px; height: 12px; border-radius: 2px; background: #fdc20d; color: #111; font-size: 10px; font-weight: 700; line-height: 12px; text-align: center; }
```
